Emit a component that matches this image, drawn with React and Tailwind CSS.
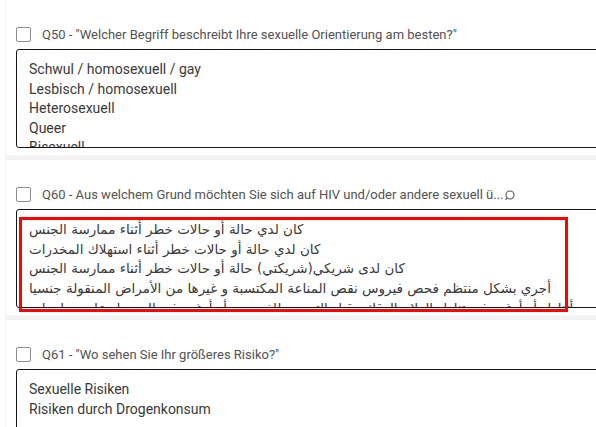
import React from "react";

const font = { fontFamily: 'Roboto, "Liberation Sans", sans-serif' };
const arabic = { fontFamily: '"DejaVu Sans", sans-serif' };

function Checkbox() {
  return <span className="block w-[15px] h-[15px] shrink-0 rounded-[2px] border border-[#8d8d8d] bg-white" />;
}

function Question({ label, icon, lines, rtl, children }) {
  return (
    <section className="bg-white h-[155px] shrink-0 pt-[27px] pl-[10px]">
      <div className="flex items-center h-[15px] gap-[11px]">
        <Checkbox />
        <span className="text-[13px] text-[#525252] whitespace-nowrap leading-none">{label}</span>
        {icon}
      </div>
      <div className="relative mt-[7px] w-[640px] h-[99px] overflow-hidden rounded-l-[3px] border border-[#161616] pl-[12px] pt-[10px]">
        {lines.map((l, i) =>
          rtl ? (
            <div
              key={i}
              dir="ltr"
              style={arabic}
              className="text-[13.5px] leading-[19.7px] text-[#393939] whitespace-nowrap text-left"
            >
              {l}
            </div>
          ) : (
            <div key={i} className="text-[14px] leading-[19.5px] text-[#393939] whitespace-nowrap">
              {l}
            </div>
          )
        )}
      </div>
      {children}
    </section>
  );
}

export default function App() {
  return (
    <div className="w-[596px] h-[427px] overflow-hidden bg-white pl-[5px]" style={font}>
      <div className="relative h-full bg-[#f4f4f4] pl-px flex flex-col gap-[5px]">
        <Question
          label={'Q50 - "Welcher Begriff beschreibt Ihre sexuelle Orientierung am besten?"'}
          lines={["Schwul / homosexuell / gay", "Lesbisch / homosexuell", "Heterosexuell", "Queer", "Bisexuell"]}
        />
        <Question
          label="Q60 - Aus welchem Grund möchten Sie sich auf HIV und/oder andere sexuell ü..."
          icon={
            <svg width="11" height="11" viewBox="0 0 11 11" className="-ml-[11px] mt-[2px]" fill="none" stroke="#525252" strokeWidth="1.1">
              <circle cx="6" cy="5" r="4" />
              <path d="M3 8 L1.5 9.8" />
            </svg>
          }
          rtl
          lines={[
            "كان لدي حالة أو حالات خطر أثناء ممارسة الجنس",
            "كان لدي حالة أو حالات خطر أثناء استهلاك المخدرات",
            "كان لدى شريكي(شريكتي) حالة أو حالات خطر أثناء ممارسة الجنس",
            "أجري بشكل منتظم فحص فيروس نقص المناعة المكتسبة و غيرها من الأمراض المنقولة جنسيا",
            "أتناول أو أرغب في تناول العلاج الوقائي قبل التعرض للفيروس أو أرغب في الحصول على معلومات",
          ]}
        >
          <div className="absolute left-[14px] top-[217px] w-[549px] h-[95px] border-[3px] border-[#ff0000] pointer-events-none" />
        </Question>
        <Question
          label={'Q61 - "Wo sehen Sie Ihr größeres Risiko?"'}
          lines={["Sexuelle Risiken", "Risiken durch Drogenkonsum"]}
        />
      </div>
    </div>
  );
}
